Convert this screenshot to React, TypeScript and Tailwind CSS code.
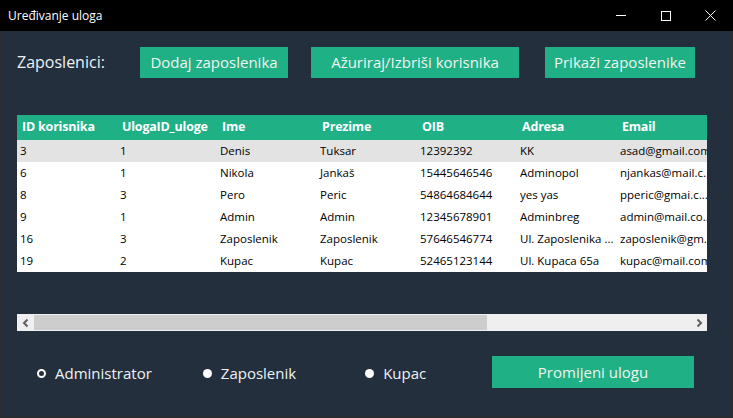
const rows = [
  ["3", "1", "Denis", "Tuksar", "12392392", "KK", "asad@gmail.com"],
  ["6", "1", "Nikola", "Jankaš", "15445646546", "Adminopol", "njankas@mail.c..."],
  ["8", "3", "Pero", "Peric", "54864684644", "yes yas", "pperic@gmai.c..."],
  ["9", "1", "Admin", "Admin", "12345678901", "Adminbreg", "admin@mail.co..."],
  ["16", "3", "Zaposlenik", "Zaposlenik", "57646546774", "Ul. Zaposlenika ...", "zaposlenik@gm..."],
  ["19", "2", "Kupac", "Kupac", "52465123144", "Ul. Kupaca 65a", "kupac@mail.com"],
];

const headers = ["ID korisnika", "UlogaID_uloge", "Ime", "Prezime", "OIB", "Adresa", "Email"];

const Radio = ({ label, checked, className }: { label: string; checked?: boolean; className?: string }) => (
  <label className={`flex items-center gap-[9px] ${className ?? ""}`}>
    <span
      className={
        checked
          ? "h-[9px] w-[9px] rounded-full border-[2px] border-white bg-[#242f3d]"
          : "h-[9px] w-[9px] rounded-full bg-white"
      }
    />
    <span className="text-[15px] text-[#eef2f5]">{label}</span>
  </label>
);

const App = () => {
  return (
    <div className="flex h-[418px] w-[733px] flex-col overflow-hidden font-['Open_Sans',sans-serif]">
      {/* title bar */}
      <div className="flex h-[31px] shrink-0 items-center bg-black text-white">
        <span className="ml-[8px] text-[12px]">Uređivanje uloga</span>
        <div className="ml-auto flex h-full items-center">
          <div className="flex h-full w-[45px] items-center justify-center">
            <span className="block h-px w-[10px] bg-white" />
          </div>
          <div className="flex h-full w-[45px] items-center justify-center">
            <span className="block h-[10px] w-[10px] border border-white" />
          </div>
          <div className="flex h-full w-[45px] items-center justify-center">
            <svg width="11" height="11" viewBox="0 0 11 11" stroke="white" strokeWidth="1">
              <path d="M0.5 0.5L10.5 10.5M10.5 0.5L0.5 10.5" />
            </svg>
          </div>
        </div>
      </div>

      {/* body */}
      <div className="flex flex-1 flex-col border-x border-b border-[#2c2c2c] bg-[#242f3d] px-[16px]">
        <div className="mt-[16px] flex h-[31px] items-center">
          <span className="w-[123px] pb-[2px] text-[16px] text-[#eef2f5]">Zaposlenici:</span>
          <button className="h-[31px] w-[148px] bg-[#20b086] text-[15px] text-[#f0f4ee]">Dodaj zaposlenika</button>
          <button className="ml-[23px] h-[31px] w-[208px] bg-[#20b086] text-[15px] text-[#f0f4ee]">Ažuriraj/Izbriši korisnika</button>
          <button className="ml-[26px] h-[31px] w-[150px] bg-[#20b086] text-[15px] text-[#f0f4ee]">Prikaži zaposlenike</button>
        </div>

        {/* grid view */}
        <div className="mt-[37px] flex h-[216px] w-[690px] flex-col">
          <div className="flex-1 overflow-hidden">
            <div className="flex h-[25px] items-center bg-[#20b086]">
              {headers.map((h) => (
                <div key={h} className="w-[100px] shrink-0 overflow-hidden pl-[5px] text-[12.5px] font-bold tracking-[-0.2px] whitespace-nowrap text-white">
                  {h}
                </div>
              ))}
            </div>
            {rows.map((r, i) => (
              <div key={i} className={`flex h-[22px] items-center ${i === 0 ? "bg-[#e3e3e3]" : "bg-white"}`}>
                {r.map((c, j) => (
                  <div key={j} className="w-[100px] shrink-0 overflow-hidden pl-[3px] text-[11.5px] whitespace-nowrap text-black">
                    {c}
                  </div>
                ))}
              </div>
            ))}
          </div>
          <div className="flex h-[17px] items-center bg-[#efefef]">
            <div className="flex w-[17px] items-center justify-center">
              <svg width="8" height="10" viewBox="0 0 8 10" fill="none" stroke="#606060" strokeWidth="2">
                <path d="M5.5 1.5L2 5l3.5 3.5" />
              </svg>
            </div>
            <div className="h-[15px] w-[453px] bg-[#cdcdcd]" />
            <div className="ml-auto flex w-[17px] items-center justify-center">
              <svg width="8" height="10" viewBox="0 0 8 10" fill="none" stroke="#606060" strokeWidth="2">
                <path d="M2.5 1.5L6 5 2.5 8.5" />
              </svg>
            </div>
          </div>
        </div>

        {/* bottom row */}
        <div className="mt-[25px] flex h-[32px] items-center">
          <Radio label="Administrator" checked className="ml-[20px] mt-[3px]" />
          <Radio label="Zaposlenik" className="ml-[51px] mt-[3px]" />
          <Radio label="Kupac" className="ml-[69px] mt-[3px]" />
          <button className="ml-auto mr-[22px] h-[32px] w-[202px] bg-[#20b086] text-[15px] text-[#f0f4ee]">Promijeni ulogu</button>
        </div>
      </div>
    </div>
  );
};

export default App;
